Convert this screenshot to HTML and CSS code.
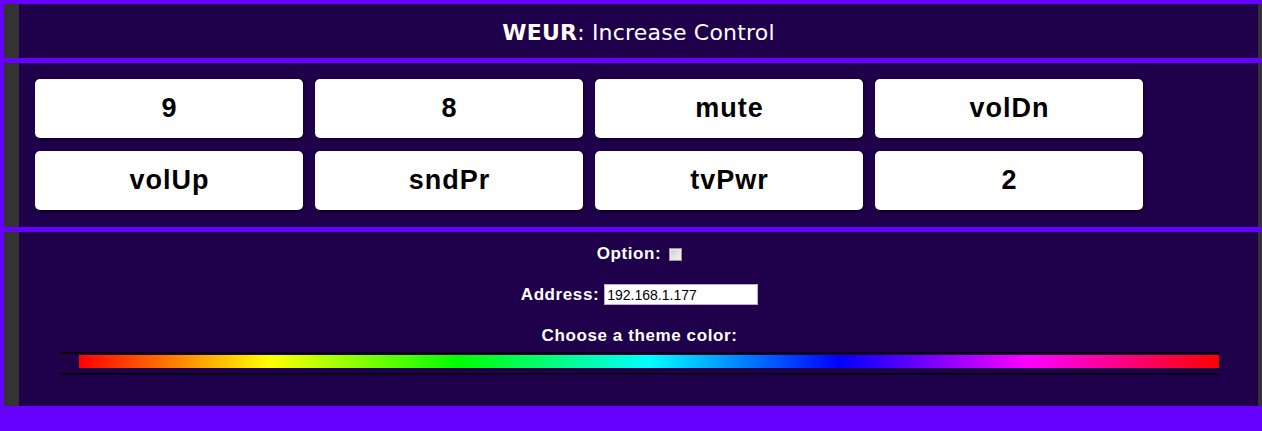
FILE: index.html
```html
<!DOCTYPE html>
<html lang="en">
<head>
    <meta charset="UTF-8">
    <meta name="viewport" content="width=device-width, initial-scale=1.0">
    <title>WEUR Remote</title>
    <link rel="stylesheet" href="styles.css">
</head>
<body>
    <div class="panel title-bar">
        <h1><strong>WEUR</strong>: Increase Control</h1>
    </div>

    <div class="panel">
        <div class="keys">
            <button class="key">9</button>
            <button class="key">8</button>
            <button class="key">mute</button>
            <button class="key">volDn</button>
            <button class="key">volUp</button>
            <button class="key">sndPr</button>
            <button class="key">tvPwr</button>
            <button class="key">2</button>
        </div>
    </div>

    <div class="panel settings">
        <label class="row option-row">Option: <input type="checkbox" id="optionBox"></label>
        <label class="row address-row">Address: <input type="text" id="addressInput" value="192.168.1.177"></label>
        <div class="row theme-label">Choose a theme color:</div>
        <div class="hue-track">
            <div class="hue-bar"></div>
        </div>
    </div>
</body>
</html>
```

FILE: styles.css
```css
body {
    margin: 4px 0 0 4px;
    background: #6600ff;
    font-family: 'Liberation Sans', Arial, sans-serif;
    color: #fff;
}
.panel {
    background: #1f004a;
    border-left: 15px solid #333;
    border-right: 4px solid #333;
    margin-bottom: 5px;
}
.title-bar {
    height: 54px;
    display: flex;
    align-items: center;
    justify-content: center;
}
h1 {
    margin: 2px 0 0;
    font-family: 'DejaVu Sans', Verdana, sans-serif;
    font-weight: normal;
    font-size: 22px;
    letter-spacing: 0.2px;
    color: #fff;
}
h1 strong {
    font-weight: bold;
}
.keys {
    display: flex;
    flex-wrap: wrap;
    gap: 13px 12px;
    padding: 16px 16px 17px;
    width: 1108px;
}
.key {
    width: 268px;
    height: 59px;
    background: #fff;
    border: none;
    border-radius: 5px;
    box-shadow: 1px 2px 3px rgba(0, 0, 0, 0.5);
    font-family: 'Liberation Sans', Arial, sans-serif;
    font-weight: bold;
    font-size: 27px;
    letter-spacing: 1px;
    text-indent: 1px;
    color: #000;
    cursor: pointer;
}

/* settings panel */
.settings {
    display: flex;
    flex-direction: column;
    align-items: center;
    padding: 12px 39px 31px 41px;
    font-weight: bold;
    font-size: 17px;
    letter-spacing: 0.6px;
}
.row {
    display: flex;
    align-items: center;
    height: 20px;
}
.option-row input {
    appearance: none;
    width: 13px;
    height: 13px;
    margin: 0 0 0 8px;
    border: 1px solid #9a9a9a;
    background: linear-gradient(135deg, #cfcfcf, #f4f4f4);
    box-shadow: inset 0 0 0 1px #e8e8e8;
}
.address-row {
    margin-top: 20px;
    height: 21px;
}
.address-row input {
    width: 148px;
    height: 17px;
    margin-left: 5px;
    padding: 1px 2px;
    border: 1px solid #b8b0d0;
    font-family: 'Liberation Sans', Arial, sans-serif;
    font-size: 14px;
    letter-spacing: 0;
    color: #000;
}
.theme-label {
    margin-top: 22px;
    height: 18px;
}
.hue-track {
    align-self: stretch;
    margin-top: 7px;
    height: 19px;
    border-top: 2px solid #0c0014;
    border-bottom: 2px solid #0c0014;
    padding-left: 19px;
}
.hue-bar {
    height: 13px;
    margin-top: 1px;
    background: linear-gradient(to right, #f00, #ff0, #0f0, #0ff, #00f, #f0f, #f00);
}
```
